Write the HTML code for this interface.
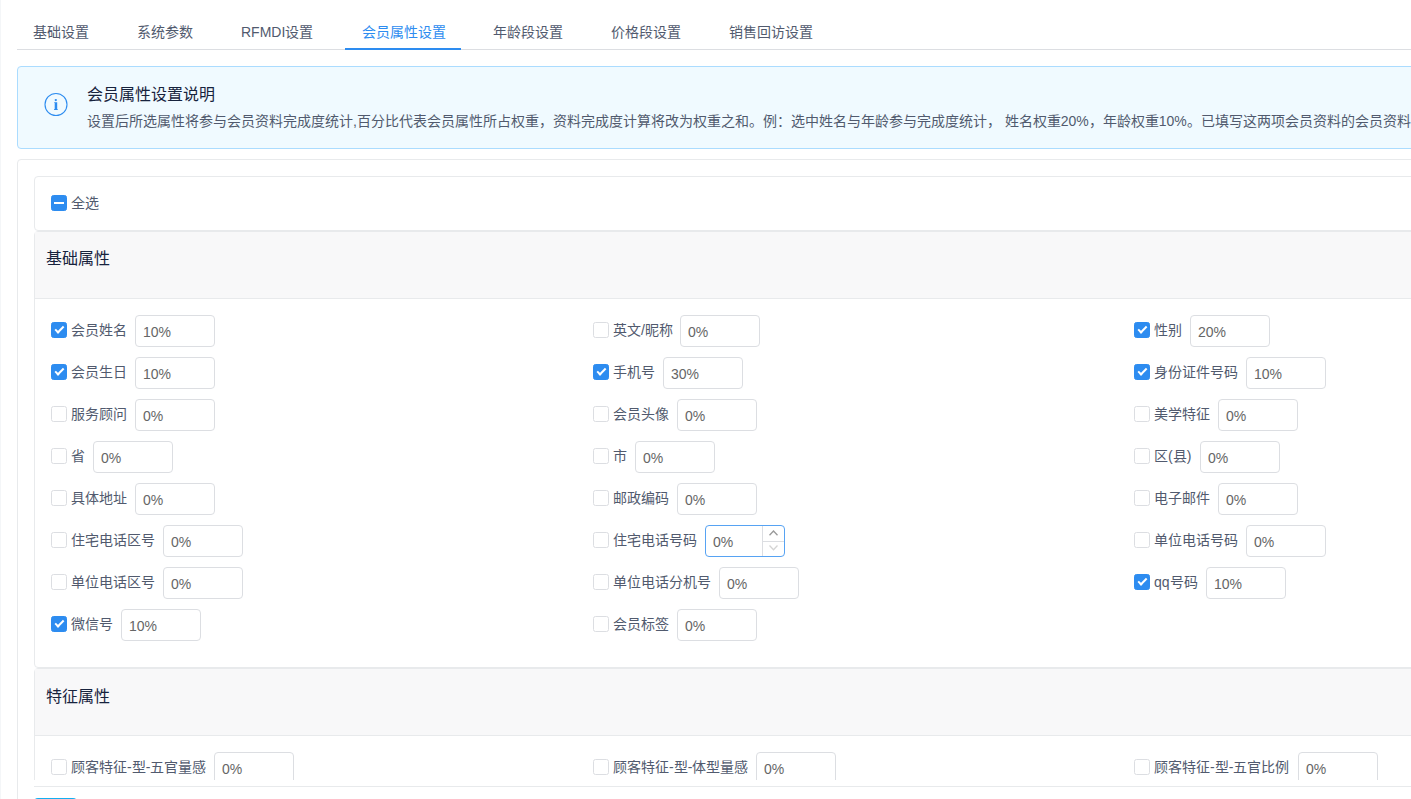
<!DOCTYPE html>
<html lang="zh-CN"><head><meta charset="utf-8">
<style>
*,*::before,*::after{box-sizing:border-box;margin:0;padding:0}
html,body{width:1411px;height:799px;overflow:hidden;background:#fff}
body{position:relative;font-family:"Liberation Sans",sans-serif;color:#515a6e;font-size:14px}
.abs{position:absolute}
.lline{position:absolute;left:0;top:0;width:1px;height:799px;background:#f4f6f8}
.tab{position:absolute;top:22px;height:20px;line-height:20px;font-size:14px;white-space:nowrap;color:#515a6e}
.tab.act{color:#2d8cf0}
.tabline{position:absolute;left:17px;top:49px;width:1500px;height:1px;background:#dcdee2}
.tabink{position:absolute;left:345px;top:48px;width:116px;height:2px;background:#2d8cf0}
.alert{position:absolute;left:17px;top:66px;width:1500px;height:83px;border:1px solid #abdcff;background:#f0faff;border-radius:4px}
.at{position:absolute;left:87px;top:85px;font-size:16px;line-height:20px;color:#17233d;white-space:nowrap}
.ad{position:absolute;left:87px;top:111px;font-size:14px;line-height:20px;color:#515a6e;white-space:nowrap}
.card{position:absolute;border:1px solid #e8eaec;border-radius:4px;background:#fff}
.head{position:absolute;background:#f8f8f9;border-bottom:1px solid #e8eaec}
.ht{position:absolute;left:46px;font-size:16px;line-height:20px;color:#17233d;white-space:nowrap}
.cb{position:absolute;width:16px;height:16px;border:1px solid #dcdee2;border-radius:2.5px;background:#fff}
.cb.on{background:#2d8cf0;border-color:#2d8cf0}
.cb.on::after{content:"";position:absolute;left:4.5px;top:1px;width:4.5px;height:9px;border:2px solid #fff;border-top:0;border-left:0;transform:rotate(45deg)}
.cb.ind{background:#2d8cf0;border-color:#2d8cf0}
.cb.ind::after{content:"";position:absolute;left:2px;top:6px;width:10px;height:2px;background:#fff}
.lb{position:absolute;height:32px;line-height:32px;font-size:14px;white-space:nowrap;color:#515a6e}
.in{position:absolute;width:80px;height:32px;border:1px solid #dcdee2;border-radius:4px;background:#fff;overflow:hidden}
.in.fo{border-color:#57a3f3}
.v{position:absolute;left:7px;top:0;line-height:32px;font-size:14px;color:#666}
.hd{position:absolute;right:0;top:0;width:22px;height:30px;border-left:1px solid #dcdee2}
.hu{position:absolute;left:0;top:0;width:21px;height:16px;border-bottom:1px solid #dcdee2}
.clip{position:absolute;left:0;top:0;width:1411px;height:780px;overflow:hidden}
.sep{position:absolute;left:34px;top:786px;width:1500px;height:1px;background:#e8eaec}
.btn{position:absolute;left:34px;top:798px;width:43px;height:32px;background:#14aff0;border-radius:4px}
</style></head><body>
<div class="lline"></div>
<div class="tab" style="left:33px">基础设置</div>
<div class="tab" style="left:137px">系统参数</div>
<div class="tab" style="left:241px">RFMDI设置</div>
<div class="tab act" style="left:362px">会员属性设置</div>
<div class="tab" style="left:493px">年龄段设置</div>
<div class="tab" style="left:611px">价格段设置</div>
<div class="tab" style="left:729px">销售回访设置</div>
<div class="tabline"></div>
<div class="tabink"></div>
<div class="alert"></div>
<svg class="abs" style="left:43px;top:92px" width="26" height="26" viewBox="0 0 26 26"><circle cx="13" cy="12.5" r="11" fill="none" stroke="#2d8cf0" stroke-width="1.1"/><circle cx="12.8" cy="8.1" r="1.15" fill="#2d8cf0"/><path d="M11.2 10.3H14.2V17.1H14.7V18H11.1V17.1H11.7V11.1H11.2Z" fill="#2d8cf0"/></svg>
<div class="at">会员属性设置说明</div>
<div class="ad">设置后所选属性将参与会员资料完成度统计,百分比代表会员属性所占权重，资料完成度计算将改为权重之和。例：选中姓名与年龄参与完成度统计， 姓名权重20%，年龄权重10%。已填写这两项会员资料的会员资料完成度为30%</div>
<div class="card" style="left:17px;top:159px;width:1500px;height:800px"></div>
<div class="clip">
<div class="card" style="left:34px;top:176px;width:1500px;height:55px"></div>
<div class="cb ind" style="left:51px;top:195px"></div>
<div class="lb" style="left:71px;top:187px">全选</div>
<div class="card" style="left:34px;top:231px;width:1500px;height:437px;overflow:hidden"></div>
<div class="head" style="left:35px;top:232px;width:1500px;height:67px"></div>
<div class="ht" style="top:249px">基础属性</div>
<div class="card" style="left:34px;top:668px;width:1500px;height:300px"></div>
<div class="head" style="left:35px;top:669px;width:1500px;height:67px"></div>
<div class="ht" style="top:687px">特征属性</div>
<div class="cb on" style="left:51px;top:322px"></div><div class="lb" style="left:71px;top:314px">会员姓名</div><div class="in" style="left:135px;top:315px"><span class="v">10%</span></div>
<div class="cb" style="left:593px;top:322px"></div><div class="lb" style="left:613px;top:314px">英文/昵称</div><div class="in" style="left:680px;top:315px"><span class="v">0%</span></div>
<div class="cb on" style="left:1134px;top:322px"></div><div class="lb" style="left:1154px;top:314px">性别</div><div class="in" style="left:1190px;top:315px"><span class="v">20%</span></div>
<div class="cb on" style="left:51px;top:364px"></div><div class="lb" style="left:71px;top:356px">会员生日</div><div class="in" style="left:135px;top:357px"><span class="v">10%</span></div>
<div class="cb on" style="left:593px;top:364px"></div><div class="lb" style="left:613px;top:356px">手机号</div><div class="in" style="left:663px;top:357px"><span class="v">30%</span></div>
<div class="cb on" style="left:1134px;top:364px"></div><div class="lb" style="left:1154px;top:356px">身份证件号码</div><div class="in" style="left:1246px;top:357px"><span class="v">10%</span></div>
<div class="cb" style="left:51px;top:406px"></div><div class="lb" style="left:71px;top:398px">服务顾问</div><div class="in" style="left:135px;top:399px"><span class="v">0%</span></div>
<div class="cb" style="left:593px;top:406px"></div><div class="lb" style="left:613px;top:398px">会员头像</div><div class="in" style="left:677px;top:399px"><span class="v">0%</span></div>
<div class="cb" style="left:1134px;top:406px"></div><div class="lb" style="left:1154px;top:398px">美学特征</div><div class="in" style="left:1218px;top:399px"><span class="v">0%</span></div>
<div class="cb" style="left:51px;top:448px"></div><div class="lb" style="left:71px;top:440px">省</div><div class="in" style="left:93px;top:441px"><span class="v">0%</span></div>
<div class="cb" style="left:593px;top:448px"></div><div class="lb" style="left:613px;top:440px">市</div><div class="in" style="left:635px;top:441px"><span class="v">0%</span></div>
<div class="cb" style="left:1134px;top:448px"></div><div class="lb" style="left:1154px;top:440px">区(县)</div><div class="in" style="left:1200px;top:441px"><span class="v">0%</span></div>
<div class="cb" style="left:51px;top:490px"></div><div class="lb" style="left:71px;top:482px">具体地址</div><div class="in" style="left:135px;top:483px"><span class="v">0%</span></div>
<div class="cb" style="left:593px;top:490px"></div><div class="lb" style="left:613px;top:482px">邮政编码</div><div class="in" style="left:677px;top:483px"><span class="v">0%</span></div>
<div class="cb" style="left:1134px;top:490px"></div><div class="lb" style="left:1154px;top:482px">电子邮件</div><div class="in" style="left:1218px;top:483px"><span class="v">0%</span></div>
<div class="cb" style="left:51px;top:532px"></div><div class="lb" style="left:71px;top:524px">住宅电话区号</div><div class="in" style="left:163px;top:525px"><span class="v">0%</span></div>
<div class="cb" style="left:593px;top:532px"></div><div class="lb" style="left:613px;top:524px">住宅电话号码</div><div class="in fo" style="left:705px;top:525px"><span class="v">0%</span><div class="hd"><div class="hu"></div><div class="hdn"></div></div><svg style="position:absolute;left:-1px;top:-1px" width="80" height="32"><path d="M64.5 10.2L68.5 6L72.5 10.2" fill="none" stroke="#999" stroke-width="1.3"/><path d="M64.5 20.5L68.5 24.7L72.5 20.5" fill="none" stroke="#d4d4d4" stroke-width="1.3"/></svg></div>
<div class="cb" style="left:1134px;top:532px"></div><div class="lb" style="left:1154px;top:524px">单位电话号码</div><div class="in" style="left:1246px;top:525px"><span class="v">0%</span></div>
<div class="cb" style="left:51px;top:574px"></div><div class="lb" style="left:71px;top:566px">单位电话区号</div><div class="in" style="left:163px;top:567px"><span class="v">0%</span></div>
<div class="cb" style="left:593px;top:574px"></div><div class="lb" style="left:613px;top:566px">单位电话分机号</div><div class="in" style="left:719px;top:567px"><span class="v">0%</span></div>
<div class="cb on" style="left:1134px;top:574px"></div><div class="lb" style="left:1154px;top:566px">qq号码</div><div class="in" style="left:1206px;top:567px"><span class="v">10%</span></div>
<div class="cb on" style="left:51px;top:616px"></div><div class="lb" style="left:71px;top:608px">微信号</div><div class="in" style="left:121px;top:609px"><span class="v">10%</span></div>
<div class="cb" style="left:593px;top:616px"></div><div class="lb" style="left:613px;top:608px">会员标签</div><div class="in" style="left:677px;top:609px"><span class="v">0%</span></div>
<div class="cb" style="left:51px;top:759px"></div><div class="lb" style="left:71px;top:751px">顾客特征-型-五官量感</div><div class="in" style="left:214px;top:752px"><span class="v">0%</span></div>
<div class="cb" style="left:593px;top:759px"></div><div class="lb" style="left:613px;top:751px">顾客特征-型-体型量感</div><div class="in" style="left:756px;top:752px"><span class="v">0%</span></div>
<div class="cb" style="left:1134px;top:759px"></div><div class="lb" style="left:1154px;top:751px">顾客特征-型-五官比例</div><div class="in" style="left:1298px;top:752px"><span class="v">0%</span></div>
</div>
<div class="sep"></div>
<div class="btn"></div>
</body></html>
